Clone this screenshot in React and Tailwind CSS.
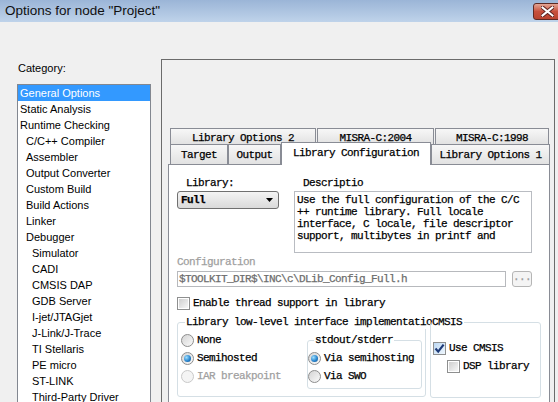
import React from 'react'

const categories = [
  { label: 'General Options', depth: 0, selected: true },
  { label: 'Static Analysis', depth: 0 },
  { label: 'Runtime Checking', depth: 0 },
  { label: 'C/C++ Compiler', depth: 1 },
  { label: 'Assembler', depth: 1 },
  { label: 'Output Converter', depth: 1 },
  { label: 'Custom Build', depth: 1 },
  { label: 'Build Actions', depth: 1 },
  { label: 'Linker', depth: 1 },
  { label: 'Debugger', depth: 1 },
  { label: 'Simulator', depth: 2 },
  { label: 'CADI', depth: 2 },
  { label: 'CMSIS DAP', depth: 2 },
  { label: 'GDB Server', depth: 2 },
  { label: 'I-jet/JTAGjet', depth: 2 },
  { label: 'J-Link/J-Trace', depth: 2 },
  { label: 'TI Stellaris', depth: 2 },
  { label: 'PE micro', depth: 2 },
  { label: 'ST-LINK', depth: 2 },
  { label: 'Third-Party Driver', depth: 2 },
]

const indent = ['pl-[2px]', 'pl-[8px]', 'pl-[14px]']

function TitleBar() {
  return (
    <div className="flex h-[22px] shrink-0 items-center justify-between bg-linear-to-b from-[#9bb5d7] to-[#bfd3ea] pl-[5px]">
      <span className="font-['Liberation_Sans',sans-serif] text-[13.5px] leading-none text-[#101010]">
        Options for node "Project"
      </span>
      <div className="mr-[-4px] mt-px flex h-[17px] w-[29px] items-center justify-center rounded-[3px] border border-[#5e2a24] bg-linear-to-b from-[#e3a595] via-[#c7503c] to-[#b8442f]">
        <svg width="13" height="11" viewBox="0 0 13 11">
          <path
            d="M1.5 1.5 L11.5 9.5 M11.5 1.5 L1.5 9.5"
            stroke="#5a2320"
            strokeWidth="4"
            strokeLinecap="square"
          />
          <path
            d="M1.5 1.5 L11.5 9.5 M11.5 1.5 L1.5 9.5"
            stroke="#ffffff"
            strokeWidth="2"
            strokeLinecap="square"
          />
        </svg>
      </div>
    </div>
  )
}

function CategoryList() {
  return (
    <div className="flex w-[161px] shrink-0 flex-col pl-[17px] pt-[38px] font-['Liberation_Sans',sans-serif] text-[11px]">
      <div className="h-[16px] pl-px leading-[16px] text-black">Category:</div>
      <div className="mt-[8px] h-[330px] w-[134px] border border-[#828790] bg-white">
        {categories.map((c) => (
          <div
            key={c.label}
            className={`h-[16px] whitespace-nowrap leading-[16px] ${indent[c.depth]} ${
              c.selected ? 'bg-[#3399ff] text-white' : 'text-black'
            }`}
          >
            {c.label}
          </div>
        ))}
      </div>
    </div>
  )
}

function Radio({ label, checked, disabled }) {
  return (
    <div className="flex h-[18px] items-center gap-[3px]">
      <span
        className={`flex h-[13px] w-[13px] shrink-0 items-center justify-center rounded-full border ${
          disabled
            ? 'border-[#c9c9c9] bg-[#f4f4f4]'
            : 'border-[#8d8d8d] bg-linear-to-br from-[#d4d4d4] to-[#fafafa]'
        }`}
      >
        {checked && (
          <span className="h-[7px] w-[7px] rounded-full bg-[radial-gradient(circle_at_35%_35%,#9fe0ff,#2a86cf_55%,#0c4a86)]" />
        )}
      </span>
      <span className={disabled ? 'text-[#a0a0a0]' : 'text-black'}>{label}</span>
    </div>
  )
}

function Checkbox({ label, checked }) {
  return (
    <div className="flex h-[13px] items-center gap-[3px]">
      <span
        className={`flex h-[13px] w-[13px] shrink-0 items-center justify-center border border-[#8e8f8f] ${
          checked ? 'bg-linear-to-br from-[#bcd8f3] to-[#f0f7fd]' : 'bg-white'
        }`}
      >
        {checked ? (
          <svg width="11" height="11" viewBox="0 0 11 11">
            <path d="M1.5 5.5 L4.2 8.6 L9.6 1.6" fill="none" stroke="#1d3a78" strokeWidth="2.2" />
          </svg>
        ) : (
          <span className="h-[9px] w-[9px] bg-linear-to-br from-[#cfcfcf] to-[#f7f7f7]" />
        )}
      </span>
      <span className="text-black">{label}</span>
    </div>
  )
}

function Tab({ label, className }) {
  return (
    <div
      className={`flex items-center justify-center whitespace-nowrap border-l border-r border-t border-[#898c95] bg-linear-to-b from-[#f7f7f7] to-[#e2e2e2] ${className}`}
    >
      {label}
    </div>
  )
}

function TabStrip() {
  return (
    <div className="ml-[2px] flex w-[380px] flex-col">
      <div className="flex h-[16px] gap-px">
        <Tab label="Library Options 2" className="w-[146px] pt-[3px]" />
        <Tab label="MISRA-C:2004" className="w-[117px] pt-[3px]" />
        <Tab label="MISRA-C:1998" className="w-[114px] pt-[3px]" />
      </div>
      <div className="flex h-[20px] items-end">
        <Tab label="Target" className="h-[20px] w-[58px] pt-[1px]" />
        <Tab label="Output" className="h-[20px] w-[53px] pt-[1px]" />
        <div className="relative z-10 -mb-px flex h-[23px] w-[150px] items-center justify-center whitespace-nowrap border-l border-r border-t border-[#898c95] bg-white pb-[2px]">
          Library Configuration
        </div>
        <Tab label="Library Options 1" className="h-[20px] w-[119px] pt-[1px]" />
      </div>
    </div>
  )
}

function TabPage() {
  return (
    <div className="h-[260px] w-[382px] border border-[#898c95] bg-white px-[8px] pt-[11px]">
      <div className="flex">
        <div className="flex w-[102px] flex-col">
          <div className="h-[15px] pl-[9px] leading-[15px]">Library:</div>
          <div className="flex h-[18px] items-center justify-between rounded-[3px] border border-[#707070] bg-linear-to-b from-[#f4f4f4] to-[#dadada] pl-[3px] pr-[5px]">
            <span className="font-bold">Full</span>
            <svg width="7" height="4" viewBox="0 0 7 4">
              <path d="M0 0 L7 0 L3.5 4 Z" fill="#000" />
            </svg>
          </div>
        </div>
        <div className="ml-[15px] flex flex-col">
          <div className="h-[15px] pl-[9px] leading-[15px]">Descriptio</div>
          <div className="h-[62px] w-[238px] border border-[#b9bcc2] px-[2px] pt-[2px] leading-[12px]">
            <div>Use the full configuration of the C/C</div>
            <div>++ runtime library. Full locale</div>
            <div>interface, C locale, file descriptor</div>
            <div>support, multibytes in printf and</div>
          </div>
        </div>
      </div>

      <div className="mt-[2px] h-[14px] leading-[14px] text-[#a0a0a0]">Configuration</div>
      <div className="mt-[2px] flex items-center">
        <div className="flex h-[16px] w-[329px] items-center border border-[#b7b9bd] pl-px text-[#6d6d6d]">
          {'$TOOLKIT_DIR$\\INC\\c\\DLib_Config_Full.h'}
        </div>
        <div className="ml-[6px] flex h-[16px] w-[20px] items-center justify-center rounded-[3px] border border-[#b5b5b5] bg-[#f4f4f4] pb-[3px] text-[#9a9a9a]">
          ...
        </div>
      </div>

      <div className="mt-[10px]">
        <Checkbox label="Enable thread support in library" />
      </div>

      <div className="mt-[12px] flex">
        <div className="relative h-[75px] w-[249px] rounded-[3px] border border-[#d5dfe5] pl-[3px] pt-[8px]">
          {/* caption runs past the box edge; the CMSIS caption sits over its tail */}
          <span className="absolute -top-[8px] left-[7px] w-[248px] overflow-hidden whitespace-nowrap bg-white px-[1px] leading-[14px]">
            Library low-level interface implementatio
          </span>
          <div className="flex">
            <div className="flex w-[126px] flex-col">
              <Radio label="None" />
              <Radio label="Semihosted" checked />
              <Radio label="IAR breakpoint" disabled />
            </div>
            <div className="relative mt-[9px] h-[49px] w-[115px] rounded-[3px] border border-[#d5dfe5] pt-[8px]">
              <span className="absolute -top-[8px] left-[6px] bg-white px-[1px] leading-[14px]">stdout/stderr</span>
              <Radio label="Via semihosting" checked />
              <Radio label="Via SWO" />
            </div>
          </div>
        </div>
        <div className="relative ml-[4px] h-[76px] w-[111px] rounded-[3px] border border-[#d5dfe5] pl-[2px] pt-[19px]">
          <span className="absolute -top-[8px] left-px z-10 bg-white pr-[2px] leading-[14px]">CMSIS</span>
          <Checkbox label="Use CMSIS" checked />
          <div className="ml-[14px] mt-[5px]">
            <Checkbox label="DSP library" />
          </div>
        </div>
      </div>
    </div>
  )
}

function OptionsPanel() {
  return (
    <div className="mt-[37px] h-[400px] w-[394px] shrink-0 border border-[#6b6b6b] pl-[6px] pt-[68px] font-['Liberation_Mono',monospace] text-[11px] tracking-[-0.6px] text-black [-webkit-text-stroke-width:0.25px]">
      <TabStrip />
      <TabPage />
    </div>
  )
}

export default function App() {
  return (
    <div className="flex h-[402px] w-[558px] flex-col overflow-hidden bg-[#f0f0f0]">
      <TitleBar />
      <div className="flex">
        <CategoryList />
        <OptionsPanel />
      </div>
    </div>
  )
}
